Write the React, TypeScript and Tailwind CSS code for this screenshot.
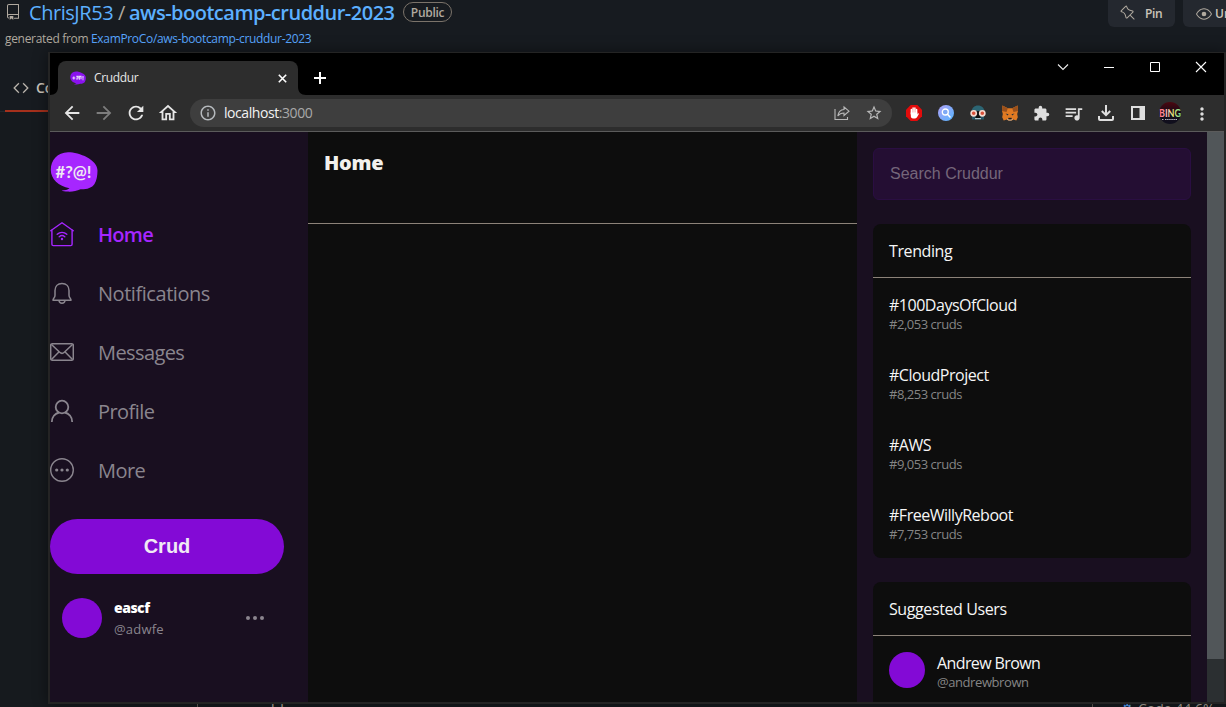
import React from "react";
import {
  MdArrowBack,
  MdArrowForward,
  MdRefresh,
  MdOutlineHome,
  MdInfoOutline,
  MdStarBorder,
  MdExtension,
  MdMoreVert,
  MdQueueMusic,
} from "react-icons/md";
import { GoRepo, GoCode, GoPin, GoEye } from "react-icons/go";

const trending = [
  { tag: "#100DaysOfCloud", count: "#2,053 cruds" },
  { tag: "#CloudProject", count: "#8,253 cruds" },
  { tag: "#AWS", count: "#9,053 cruds" },
  { tag: "#FreeWillyReboot", count: "#7,753 cruds" },
];

function HomeIcon() {
  return (
    <svg width="24" height="26" viewBox="0 0 24 26" fill="none" stroke="currentColor" strokeWidth="1.4" strokeLinejoin="round" strokeLinecap="round">
      <path d="M.7 9.700 12 1.700l11.300 8M1.900 8.800v14.400c0 .9.500 1.400 1.400 1.400h17.400c.9 0 1.400-.5 1.400-1.400V8.800" />
      <path d="M7.200 13.300c2.800-2.500 6.800-2.500 9.600 0M9.200 15.700c1.700-1.400 3.900-1.400 5.600 0" />
      <circle cx="12" cy="18" r="1.200" fill="currentColor" stroke="none" />
    </svg>
  );
}

function BellIcon() {
  return (
    <svg width="24" height="26" viewBox="0 0 24 26" fill="none" stroke="currentColor" strokeWidth="1.500" strokeLinejoin="round">
      <path d="M12 3.500c-4.400 0-7 3-7 7v4.700c0 2.500-2 3.200-2 5h18c0-1.800-2-2.500-2-5v-4.700c0-4-2.600-7-7-7Z" />
      <path d="M9 20.500c.2 1.900 1.400 2.700 3 2.700s2.800-.8 3-2.700" />
    </svg>
  );
}

function MailIcon() {
  return (
    <svg width="24" height="26" viewBox="0 0 24 26" fill="none" stroke="currentColor" strokeWidth="1.500" strokeLinejoin="round">
      <rect x=".7" y="4.700" width="22.600" height="16.500" rx="1.500" />
      <path d="m1.500 5.500 8.200 7.800c1.500 1.400 3.100 1.400 4.600 0l8.200-7.800M1.500 20.500l7.600-7.700M22.500 20.500l-7.600-7.700" />
    </svg>
  );
}

function ProfileIcon() {
  return (
    <svg width="24" height="26" viewBox="0 0 24 26" fill="none" stroke="currentColor" strokeWidth="1.800">
      <circle cx="12" cy="9" r="6.300" />
      <path d="M1.800 24c0-5.300 3.500-8.600 7.300-9.500M22.200 24c0-5.300-3.500-8.600-7.300-9.500" />
    </svg>
  );
}

function MoreIcon() {
  return (
    <svg width="24" height="26" viewBox="0 0 24 26" fill="none" stroke="currentColor" strokeWidth="1.400">
      <circle cx="12" cy="13" r="11.300" />
      <g fill="currentColor" stroke="none">
        <circle cx="6.700" cy="13" r="1.600" />
        <circle cx="12" cy="13" r="1.600" />
        <circle cx="17.300" cy="13" r="1.600" />
      </g>
    </svg>
  );
}

const nav = [
  { label: "Home", icon: HomeIcon, style: "text-[#a626ff] font-semibold tracking-[-0.7px]" },
  { label: "Notifications", icon: BellIcon, style: "text-[#8a858e] tracking-[-0.45px]" },
  { label: "Messages", icon: MailIcon, style: "text-[#8a858e] tracking-[-0.6px]" },
  { label: "Profile", icon: ProfileIcon, style: "text-[#8a858e] tracking-[-0.55px]" },
  { label: "More", icon: MoreIcon, style: "text-[#8a858e] tracking-[-0.55px]" },
];

function Logo() {
  return (
    <svg width="48" height="40" viewBox="0 0 48 40">
      <path
        d="M.8 18C.8 8 7.500.400 18 .300c11-.100 29.500 7.200 29.500 18.200 0 5-1 10.300-3 13.500-2.500 4-8 5.500-14 5.300-4 1.800-8.500 2.600-13 2.300-2.500-.1-4.600-.5-5.900-1.200 3.300 0 6-.5 8-2.100C8.500 34.300.8 27 .8 18Z"
        fill="#a626ff"
      />
      <text x="23.500" y="25.500" textAnchor="middle" textLength="36" lengthAdjust="spacingAndGlyphs" fill="#efeaf2" fontFamily="Lato, sans-serif" fontWeight="700" fontSize="17">
        #?@!
      </text>
    </svg>
  );
}

function Github() {
  return (
    <div className="flex h-[707px] w-[1226px] flex-col overflow-hidden bg-[#171b20] font-['Open_Sans',sans-serif] text-[#b0a99f]">
      <div className="flex h-[27px] items-center">
        <GoRepo className="-mt-1 ml-[5px] h-4 w-4 shrink-0" />
        <div className="-mt-[2px] ml-2 flex items-center text-xl leading-[26px] text-[#5cb0ff]">
          <span className="w-[85px] whitespace-nowrap tracking-[-0.45px]">ChrisJR53</span>
          <span className="ml-1 w-[11px] text-[#b0a99f]">/</span>
          <span className="w-[268px] whitespace-nowrap font-semibold tracking-[-0.5px]">aws-bootcamp-cruddur-2023</span>
        </div>
        <span className="mb-[3px] ml-[6px] flex h-5 w-[49px] items-center justify-center rounded-full border border-[#7b736a] pt-px text-xs font-semibold tracking-[-0.3px]">
          Public
        </span>
        <span className="ml-auto mr-2 flex h-[27px] w-[67px] items-center gap-[9px] rounded-b-md bg-[#24282f] pl-3 text-xs font-semibold text-[#ccc5bb]">
          <GoPin className="-mt-px h-4 w-4 text-[#b0a99f]" />
          <span className="tracking-[-0.4px]">Pin</span>
        </span>
        <span className="flex h-[27px] w-[43px] items-center gap-[3px] overflow-hidden rounded-bl-md bg-[#24282f] pl-[13px] text-xs font-semibold text-[#ccc5bb]">
          <GoEye className="h-4 w-4 shrink-0 text-[#b0a99f]" />
          Unwatch
        </span>
      </div>
      <div className="ml-[5px] mt-[3px] flex h-[18px] items-center gap-1 whitespace-nowrap text-xs">
        <span className="w-[82px] tracking-[-0.32px]">generated from</span>
        <span className="tracking-[-0.33px] text-[#58a6ff]">ExamProCo/aws-bootcamp-cruddur-2023</span>
      </div>
      <div className="mt-[26px] flex h-[38px] border-b border-[#24282c]">
        <div className="ml-[5px] flex h-[38px] w-28 items-center gap-[7px] border-b-2 border-[#a5301c] pb-2 pl-2 text-sm font-semibold text-[#ccc5bb]">
          <GoCode className="h-4 w-4" strokeWidth=".5" />
          Code
        </div>
      </div>
      <div className="flex flex-1 items-end overflow-hidden bg-[#161a1e]">
        <div className="ml-[197px] h-40 w-[896px] shrink-0 border-x border-[#625c55] pl-[63px] pt-[143px] text-base leading-[14px] tracking-[-0.42px]">
          Application: Cruddur
        </div>
        <div className="ml-[28px] h-[5px] shrink-0 whitespace-nowrap text-sm leading-[14px] text-[#58a6ff]">
          <span className="mr-1">⚙</span>
          <span className="text-[#b0a99f]">Code 44.6%</span>
        </div>
      </div>
    </div>
  );
}

function TabStrip() {
  return (
    <div className="flex h-[42px] bg-black pl-2">
      <div className="relative mt-2 flex h-[34px] w-60 items-center rounded-t-lg bg-[#2d2d2d] pl-3 text-xs text-[#e8e8e8]">
        <svg className="absolute -left-2 bottom-0" width="8" height="8">
          <path d="M8 0v8H0c5 0 8-3 8-8Z" fill="#2d2d2d" />
        </svg>
        <svg className="absolute -right-2 bottom-0" width="8" height="8">
          <path d="M0 0v8h8C3 8 0 5 0 0Z" fill="#2d2d2d" />
        </svg>
        <svg width="16" height="14" viewBox="0 0 48 40">
          <path d="M.8 18C.8 8 7.500.400 18 .300c11-.100 29.500 7.200 29.500 18.200 0 5-1 10.300-3 13.500-2.500 4-8 5.500-14 5.300-4 1.800-8.500 2.600-13 2.300l-6-1.200 8-2.100C8.500 34.300.8 27 .8 18Z" fill="#8a12ee" />
          <path d="M7 20h9M11.500 15.500v9M19 15l5 0v5h-3v5M28 25V15h5v9M39 14v8M39 24v3" fill="none" stroke="#e6d4fa" strokeWidth="3.500" />
        </svg>
        <span className="ml-2 tracking-[-0.35px]">Cruddur</span>
        <svg className="ml-auto mr-[11px]" width="9" height="9" viewBox="0 0 9 9" stroke="#fff" strokeWidth="1.600">
          <path d="m.8.8 7.400 7.400m0-7.400L.8 8.200" />
        </svg>
      </div>
      <svg className="ml-4 mt-[19px]" width="12" height="12" stroke="#fff" strokeWidth="2">
        <path d="M6 0v12M0 6h12" />
      </svg>
      <div className="ml-auto flex h-7 items-center [&>svg]:mx-[17px]">
        <svg width="12" height="12" fill="none" stroke="#eee" strokeWidth="1.100">
          <path d="m1 3.500 5 5 5-5" />
        </svg>
        <svg width="12" height="12" stroke="#fff">
          <path d="M1 6.500h10" />
        </svg>
        <svg width="12" height="12" fill="none" stroke="#fff">
          <path d="M1.500 1.500h9v9h-9z" />
        </svg>
        <svg width="12" height="12" stroke="#fff" strokeWidth="1.100">
          <path d="m1 1 10 10m0-10L1 11" />
        </svg>
      </div>
    </div>
  );
}

function Extensions() {
  return (
    <div className="ml-[6px] flex items-center text-[#dedede] [&>div]:flex [&>div]:w-8 [&>div]:justify-center">
      <div>
        <svg width="16" height="16" viewBox="0 0 16 16">
          <path d="M4.700 0h6.600L16 4.700v6.600L11.300 16H4.700L0 11.300V4.700Z" fill="#e30b0b" />
          <path d="M5.400 9V4.500M7.100 8V3M8.900 8V3M10.600 9V4.500" stroke="#fff" strokeWidth="1.500" strokeLinecap="round" />
          <path d="M4.700 7.500h6.600v2l1-1.200.7.400-2 3.600c-.9 1.700-5.400 1.700-6.100-.3Z" fill="#fff" />
        </svg>
      </div>
      <div>
        <svg width="16" height="16" viewBox="0 0 16 16">
          <defs>
            <linearGradient id="lens" x1="0" y1="0" x2="1" y2="1">
              <stop offset="0" stopColor="#b0a0f5" />
              <stop offset="1" stopColor="#55b4ff" />
            </linearGradient>
          </defs>
          <circle cx="8" cy="8" r="8" fill="url(#lens)" />
          <circle cx="7.300" cy="7" r="3" fill="#7ea9f5" stroke="#fff" strokeWidth="1.300" />
          <path d="m9.500 9.300 2.500 2.700" stroke="#fff" strokeWidth="1.500" strokeLinecap="round" />
        </svg>
      </div>
      <div>
        <svg width="16" height="16" viewBox="0 0 16 16">
          <path d="M1.500 7.500C1.500 3 4.500.5 8 .5s6.500 2.500 6.500 7Z" fill="#2c6573" />
          <path d="M2 6h12v8H2Z" fill="#171717" />
          <path d="M2 11h12v3.500H2Z" fill="#285767" />
          <path d="M5.500 10h5v3h-5Z" fill="#111" />
          <circle cx="3.700" cy="8.300" r="2.600" fill="#d94f38" stroke="#f5d9cf" strokeWidth="1.600" />
          <circle cx="12.300" cy="8.300" r="2.600" fill="#d94f38" stroke="#f5d9cf" strokeWidth="1.600" />
          <path d="M5 13.700h6" stroke="#d5e3e7" />
        </svg>
      </div>
      <div>
        <svg width="16" height="16" viewBox="0 0 16 16">
          <path d="m.4.500 5.400 2.800h4.400L15.600.500l.4 5.500-.8 3 .6 3.200-1.500 3.200-3-.8-1.500 1H6.200l-1.500-1-3 .8L.2 12.200.8 9 0 6Z" fill="#e17a22" />
          <path d="m.4.500 5.400 2.800L4.500 7 0 6ZM15.600.500l-5.400 2.800L11.500 7 16 6Z" fill="#99501c" />
          <path d="m3.500 8.500 3 .7-.8 1.200ZM12.500 8.500l-3 .7.800 1.200Z" fill="#24303c" />
          <path d="m5 14 1.600-.5v1.300h2.800v-1.300L11 14l-1.600 1.500H6.600Z" fill="#cfc2b4" />
          <path d="M6.300 12.800h3.400v1.500H6.300Z" fill="#1d1d1d" />
        </svg>
      </div>
      <div><MdExtension size={17} className="-ml-px" /></div>
      <div><MdQueueMusic size={21} className="-ml-[2px]" /></div>
      <div>
        <svg width="16" height="16" viewBox="0 0 16 16" fill="none" stroke="currentColor" strokeWidth="2">
          <path d="M8 0v10M3.800 6 8 10.200 12.200 6M1 11v3c0 .6.400 1 1 1h12c.6 0 1-.4 1-1v-3" />
        </svg>
      </div>
      <div>
        <svg width="14" height="14" viewBox="0 0 14 14">
          <path fillRule="evenodd" d="M0 0h14v14H0ZM2 2v10h6.500V2Z" fill="currentColor" />
        </svg>
      </div>
      <div>
        <svg width="22" height="22" viewBox="0 0 22 22">
          <defs>
            <linearGradient id="bing" x1="0" x2="1">
              <stop offset="0" stopColor="#ff5b6e" />
              <stop offset=".35" stopColor="#ffc0c8" />
              <stop offset=".65" stopColor="#e6ed70" />
              <stop offset="1" stopColor="#6bd993" />
            </linearGradient>
            <linearGradient id="disc" x1="0" y1="0" x2="0" y2="1">
              <stop offset="0" stopColor="#4d0710" />
              <stop offset=".5" stopColor="#130c18" />
              <stop offset="1" stopColor="#10101e" />
            </linearGradient>
          </defs>
          <circle cx="11" cy="11" r="11" fill="url(#disc)" />
          <text x="0" y="14.500" textLength="22" lengthAdjust="spacingAndGlyphs" fontFamily="Lato, sans-serif" fontWeight="700" fontSize="11.500" fill="url(#bing)">BING</text>
          <path d="M3 17.500h2M6 17.500h12" stroke="#b9b9c4" strokeDasharray="1.500 .6" />
        </svg>
      </div>
      <div><MdMoreVert size={20} className="mt-px" /></div>
    </div>
  );
}

function Toolbar() {
  return (
    <div className="flex h-[37px] items-center border-b border-[#5b5b5b] bg-[#2d2d2d] pl-[6px] text-[#e6e6e6]">
      <div className="flex [&>svg]:mx-[5px]">
        <MdArrowBack size={22} />
        <MdArrowForward size={22} color="#7d7d7d" />
        <MdRefresh size={22} />
        <MdOutlineHome size={22} />
      </div>
      <div className="ml-[6px] flex h-7 w-[702px] items-center rounded-full bg-[#3e3e3e] pl-[9px]">
        <MdInfoOutline size={18} color="#b5b9bd" />
        <span className="ml-[7px] text-sm tracking-[-0.43px] text-[#f2f2f2]">
          localhost<span className="text-[#a9a9a9]">:3000</span>
        </span>
        <svg className="ml-auto" width="16" height="16" viewBox="0 0 16 16" fill="none" stroke="#b8b8b8" strokeWidth="1.100">
          <path d="M1 4v10.500h12.500V12M10 2l5 4.200-5 4.300V8C7.200 8 5.200 9 3.800 11 4.300 7.300 6.300 4.800 10 4.500Z" />
        </svg>
        <MdStarBorder size={18} color="#b8b8b8" className="ml-[15px] mr-[9px]" />
      </div>
      <Extensions />
    </div>
  );
}

function Sidebar() {
  return (
    <aside className="w-[258px] bg-[#190f20]">
      <div className="h-[73px] pt-5">
        <Logo />
      </div>
      {nav.map(({ label, icon: Icon, style }) => (
        <div key={label} className={"flex h-[59px] items-center gap-6 text-xl [&>svg]:-mt-[2px] " + style}>
          <Icon />
          <span>{label}</span>
        </div>
      ))}
      <button className="mt-[19px] flex h-[55px] w-[234px] items-center justify-center rounded-full bg-[#830ad6] pb-[2px] font-['Liberation_Sans',sans-serif] text-xl font-bold text-[#f0eaf4]">
        Crud
      </button>
      <div className="ml-3 mt-6 flex h-10 items-center">
        <div className="h-10 w-10 rounded-full bg-[#830ad6]" />
        <div className="ml-3 w-[132px] text-[13px]">
          <div className="h-5 text-sm font-extrabold leading-5 tracking-[-0.5px] text-white">eascf</div>
          <div className="h-5 leading-[22px] tracking-[0.2px] text-[#8a858e]">@adwfe</div>
        </div>
        <svg width="18" height="4" fill="#8b858e">
          <circle cx="2" cy="2" r="2" />
          <circle cx="9" cy="2" r="2" />
          <circle cx="16" cy="2" r="2" />
        </svg>
      </div>
    </aside>
  );
}

function PanelTitle({ children }: { children: React.ReactNode }) {
  return <h2 className="h-[54px] border-b border-[#8c8279] pl-4 text-base leading-[55px] tracking-[-0.4px]">{children}</h2>;
}

function Aside() {
  return (
    <aside className="w-[350px] overflow-hidden bg-[#190f20] px-4 pt-4 text-[#f6f6f6]">
      <div className="h-[52px] rounded-md border border-[#2a0e42] bg-[#240e33] pl-4 font-['Liberation_Sans',sans-serif] text-base leading-[49px] text-[#75667a]">
        Search Cruddur
      </div>
      <section className="mt-6 rounded-lg bg-[#0d0d0d]">
        <PanelTitle>Trending</PanelTitle>
        {trending.map((t) => (
          <div key={t.tag} className="h-[70px] px-4 pt-4">
            <div className="text-base leading-[22px] tracking-[-0.48px]">{t.tag}</div>
            <div className="text-[13px] leading-4 tracking-[-0.47px] text-[#858585]">{t.count}</div>
          </div>
        ))}
      </section>
      <section className="mt-6 h-36 rounded-lg bg-[#0d0d0d]">
        <PanelTitle>Suggested Users</PanelTitle>
        <div className="flex gap-3 px-4 pt-4">
          <div className="h-9 w-9 rounded-full bg-[#830ad6]" />
          <div>
            <div className="text-base leading-[22px] tracking-[-0.6px]">Andrew Brown</div>
            <div className="text-[13px] leading-4 tracking-[-0.42px] text-[#858585]">@andrewbrown</div>
          </div>
        </div>
      </section>
    </aside>
  );
}

export default function App() {
  return (
    <div className="relative h-[707px] w-[1226px] overflow-hidden font-['Open_Sans',sans-serif]">
      <Github />
      <div className="absolute left-12 top-[52px] w-[1178px] border-2 border-t border-[#242424] bg-black shadow-[0_0_14px_rgba(0,0,0,0.45)]">
        <TabStrip />
        <Toolbar />
        <div className="flex h-[570px]">
          <Sidebar />
          <main className="w-[549px] bg-[#0d0d0d]">
            <h1 className="h-[92px] border-b border-[#8c8279] pl-4 pt-[17px] text-xl font-extrabold leading-[28px] tracking-[-0.3px] text-[#f2f0ec]">Home</h1>
          </main>
          <Aside />
          <div className="w-[17px] bg-[#2b2f31]">
            <div className="h-[527px] bg-[#515659]" />
          </div>
        </div>
      </div>
    </div>
  );
}
